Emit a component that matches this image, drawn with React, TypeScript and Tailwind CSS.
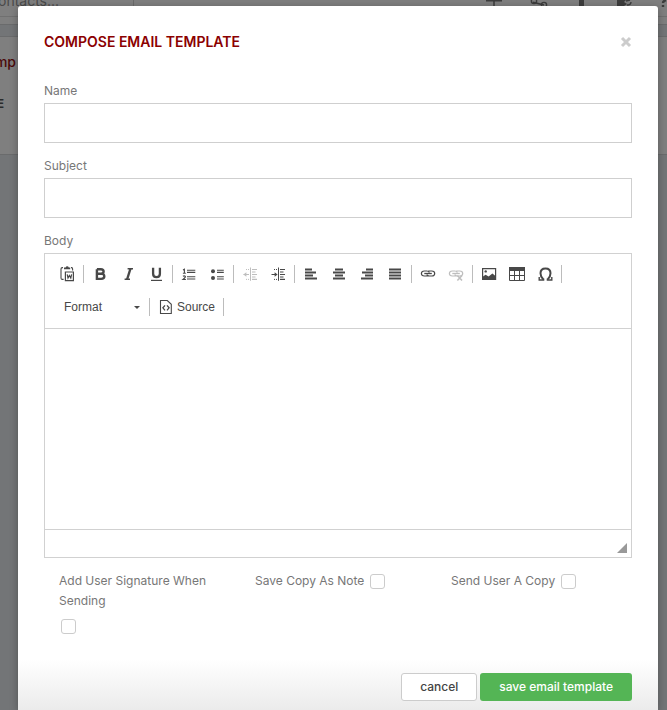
import type { ReactNode } from 'react'

const icon = 'size-4 shrink-0'

function Separator() {
  return <span className="mx-[2px] h-[18px] w-px shrink-0 bg-[#bcbcbc]" />
}

function ToolButton({ label, disabled, children }: { label: string; disabled?: boolean; children: ReactNode }) {
  return (
    <button
      type="button"
      aria-label={label}
      title={label}
      disabled={disabled}
      className="flex size-7 items-center justify-center text-[#484848] disabled:opacity-35"
    >
      {children}
    </button>
  )
}

function Group({ children }: { children: ReactNode }) {
  return (
    <div className="flex items-center">
      {children}
      <Separator />
    </div>
  )
}

function PasteWordIcon() {
  return (
    <svg viewBox="0 0 16 16" className={icon} fill="none" stroke="currentColor">
      <path d="M4 1.6H3.3Q2 1.6 2 3V12Q2 13.4 3.3 13.4H4.6M12 1.6H12.6Q13.6 1.7 13.6 3V4.4" strokeWidth="1.1" />
      <path d="M5 3.2V1.5H6.6Q7 .3 8.2 .3T9.8 1.5H11.2V3.2Z" fill="currentColor" stroke="none" />
      <path d="M6.4 6H14.4V14.6H6.4Z" strokeWidth="1.2" />
      <path d="M8.2 8.4L9 12 10.4 9.4 11.8 12 12.6 8.4" strokeWidth="1.2" />
    </svg>
  )
}

function BoldIcon() {
  return (
    <svg viewBox="0 0 16 16" className={icon} fill="none" stroke="currentColor" strokeWidth="2.4">
      <path d="M4.9 3.2V12.9H9.2Q12.3 12.9 12.3 10.3T9.2 7.8H4.9M4.9 3.2H8.8Q11.6 3.2 11.6 5.5T8.8 7.8" />
    </svg>
  )
}

function ItalicIcon() {
  return (
    <svg viewBox="0 0 16 16" className={icon} fill="none" stroke="currentColor">
      <path d="M7.6 2.8H13M4.6 13.3H10" strokeWidth="1.6" />
      <path d="M10.5 2.6L7.1 13.4" strokeWidth="2.3" />
    </svg>
  )
}

function UnderlineIcon() {
  return (
    <svg viewBox="0 0 16 16" className={icon} fill="none" stroke="currentColor">
      <path d="M5.1 1.8V7.7Q5.1 11.1 8.5 11.1T11.9 7.7V1.8" strokeWidth="2.3" />
      <path d="M3 14.4H14" strokeWidth="1.2" />
    </svg>
  )
}

function NumberedListIcon() {
  return (
    <svg viewBox="0 0 16 16" className={icon} fill="none" stroke="currentColor">
      <path d="M2 3.9L3.4 3.1V7.2M1.9 7.3H4.8M1.9 10.3Q3.2 9.4 4.2 10.2T2 13.5H4.9" strokeWidth="1.1" />
      <path d="M6 4.2H14.3M6 6.4H14.3M6 10.8H14.3M6 13H14.3" strokeWidth="1.1" />
    </svg>
  )
}

function BulletListIcon() {
  return (
    <svg viewBox="0 0 16 16" className={icon} fill="none" stroke="currentColor">
      <circle cx="4" cy="5.2" r="2" fill="currentColor" stroke="none" />
      <circle cx="4" cy="11.9" r="2" fill="currentColor" stroke="none" />
      <path d="M8 4.2H14.8M8 6.4H14.8M8 10.8H14.8M8 13H14.8" strokeWidth="1.1" />
    </svg>
  )
}

function IndentIcon({ outdent }: { outdent?: boolean }) {
  return (
    <svg viewBox="0 0 16 16" className={icon} fill="none" stroke="currentColor">
      <path d="M8.5 1.5V14.8" />
      <path d="M10 3.5H15M10 6H13.5M10 8.5H15M10 11H13.5M10 13.4H15" strokeWidth="1.1" />
      <path d="M4 3.5H7.5M4 13.4H7.5" strokeDasharray="1 1" />
      <path d="M1.5 8.5H7" />
      {outdent ? (
        <path d="M4.4 6.2V10.8L1.4 8.5Z" fill="currentColor" stroke="none" />
      ) : (
        <path d="M4.6 6.2V10.8L7.6 8.5Z" fill="currentColor" stroke="none" />
      )}
    </svg>
  )
}

function AlignIcon({ d }: { d: string }) {
  return (
    <svg viewBox="0 0 16 16" className={icon} fill="none" stroke="currentColor" strokeWidth="2">
      <path d={d} />
    </svg>
  )
}

function LinkIcon({ broken }: { broken?: boolean }) {
  return (
    <svg viewBox="0 0 16 16" className={icon} fill="none" stroke="currentColor">
      <path
        d="M7.8 10H4.3Q1.4 10 1.4 7.5T4.3 5H6.8Q9 5 9.3 6.6M8.3 5H11.8Q14.7 5 14.7 7.5T11.8 10H9.3Q7.2 10 6.8 8.5"
        strokeWidth="1.2"
      />
      <path d="M4.3 7.5H11.8" strokeWidth="1.3" />
      {broken && <path d="M9.4 9.6L14 14.6M14 9.6L9.4 14.6" strokeWidth="1.5" />}
    </svg>
  )
}

function ImageIcon() {
  return (
    <svg viewBox="0 0 16 16" className={icon} fill="none" stroke="currentColor">
      <path d="M1.6 2.6H14.6V13.4H1.6Z" strokeWidth="1.2" />
      <path d="M2 13V10.6L4.6 8.8 7.6 10.6 11.4 7.4 14.2 9.8V13Z" fill="currentColor" stroke="none" />
      <circle cx="4.7" cy="5.4" r="1.2" fill="currentColor" stroke="none" />
    </svg>
  )
}

function TableIcon() {
  return (
    <svg viewBox="0 0 16 16" className={icon} fill="none" stroke="currentColor">
      <path d="M0 1H16V5H0Z" fill="currentColor" stroke="none" />
      <path d="M.5 5V14.5H15.5V5M5.5 5V14.5M10.5 5V14.5M.5 9.5H15.5" />
    </svg>
  )
}

function OmegaIcon() {
  return (
    <svg viewBox="0 0 16 16" className={icon} fill="none" stroke="currentColor">
      <path d="M6.2 13.2Q3.5 10.8 3.5 7.3Q3.5 2.5 8.5 2.5T13.5 7.3Q13.5 10.8 10.8 13.2" strokeWidth="2" />
      <path d="M2.2 11V14H6.6V12.6M14.8 11V14H10.4V12.6" strokeWidth="1.4" />
    </svg>
  )
}

function SourceIcon() {
  return (
    <svg viewBox="0 0 16 16" className={icon} fill="none" stroke="currentColor">
      <path d="M2.5 1.5H9.3L13.3 5.3V14.5H2.5Z" strokeWidth="1.1" />
      <path d="M7 6.3L4.9 8.8 7 11.3M9 6.3L11.1 8.8 9 11.3" strokeWidth="1.3" />
    </svg>
  )
}

function Toolbar() {
  return (
    <div className="flex flex-wrap gap-y-[5px] border-b border-[#d1d1d1] px-2 pt-[6px] pb-[7px]">
      <Group>
        <ToolButton label="Paste from Word"><PasteWordIcon /></ToolButton>
      </Group>
      <Group>
        <ToolButton label="Bold"><BoldIcon /></ToolButton>
        <ToolButton label="Italic"><ItalicIcon /></ToolButton>
        <ToolButton label="Underline"><UnderlineIcon /></ToolButton>
      </Group>
      <Group>
        <ToolButton label="Numbered list"><NumberedListIcon /></ToolButton>
        <ToolButton label="Bulleted list"><BulletListIcon /></ToolButton>
      </Group>
      <Group>
        <ToolButton label="Decrease indent" disabled><IndentIcon outdent /></ToolButton>
        <ToolButton label="Increase indent"><IndentIcon /></ToolButton>
      </Group>
      <Group>
        <ToolButton label="Align left"><AlignIcon d="M2 3.5H9M2 6.5H13M2 9.5H10M2 12.5H14" /></ToolButton>
        <ToolButton label="Center"><AlignIcon d="M4 3.5H12M2 6.5H14M4 9.5H12M2 12.5H14" /></ToolButton>
        <ToolButton label="Align right"><AlignIcon d="M7 3.5H14M3 6.5H14M6 9.5H14M2 12.5H14" /></ToolButton>
        <ToolButton label="Justify"><AlignIcon d="M2 3.5H14M2 6.5H14M2 9.5H14M2 12.5H14" /></ToolButton>
      </Group>
      <Group>
        <ToolButton label="Link"><LinkIcon /></ToolButton>
        <ToolButton label="Unlink" disabled><LinkIcon broken /></ToolButton>
      </Group>
      <Group>
        <ToolButton label="Image"><ImageIcon /></ToolButton>
        <ToolButton label="Table"><TableIcon /></ToolButton>
        <ToolButton label="Insert special character"><OmegaIcon /></ToolButton>
      </Group>
      <Group>
        <div className="relative flex h-7 w-[94px] items-center">
          <select
            aria-label="Paragraph format"
            className="h-full w-full appearance-none bg-transparent pl-[11px] font-['Liberation_Sans',sans-serif] text-xs text-[#484848]"
          >
            <option>Format</option>
          </select>
          <span className="pointer-events-none absolute right-[7px] border-x-[3px] border-t-[3px] border-x-transparent border-t-[#484848]" />
        </div>
      </Group>
      <Group>
        <button
          type="button"
          className="flex h-7 items-center gap-[3px] px-[6px] font-['Liberation_Sans',sans-serif] text-xs text-[#484848]"
        >
          <SourceIcon />
          Source
        </button>
      </Group>
    </div>
  )
}

function Field({ id, label }: { id: string; label: string }) {
  return (
    <div className="mb-[11px]">
      <label htmlFor={id} className="block leading-6">{label}</label>
      <input id={id} type="text" className="block h-10 w-full border border-[#cfcfcf] bg-white px-3 outline-none" />
    </div>
  )
}

function CheckOption({ id, label }: { id: string; label: string }) {
  return (
    <div className="flex flex-wrap content-start items-center gap-x-1 gap-y-2 px-[15px]">
      <label htmlFor={id} className="leading-5">{label}</label>
      <input
        id={id}
        type="checkbox"
        className="ml-[2px] size-[15px] appearance-none rounded-[3px] border border-[#cccccc] bg-white checked:bg-[#54b454]"
      />
    </div>
  )
}

function Backdrop() {
  return (
    <div className="absolute inset-0 flex flex-col overflow-hidden bg-[#737577]" aria-hidden="true">
      <div className="h-[25px] shrink-0 border-b border-[#6a6b6c] bg-[#7f7f7f]">
        <div className="flex h-[17px] items-start justify-between border-b border-[#707070]">
          <div className="flex h-full w-[134px] items-start border-r border-[#6a6a6a] text-sm leading-5 text-[#4a4a4a]">
            <span className="-mt-[9px] -ml-[10px]">contacts...</span>
          </div>
          <svg viewBox="0 0 190 8" className="h-2 w-[190px] shrink-0" fill="none" stroke="#3c3c3c">
            <path d="M9 .8H25M17 0V6" strokeWidth="1.5" />
            <path d="M56 2.2L67 5" strokeWidth="1.4" />
            <circle cx="57" cy="1" r="2.6" strokeWidth="1.4" />
            <circle cx="67" cy="5" r="2.6" strokeWidth="1.4" />
            <path d="M102 0H107V6H102Z" fill="#3c3c3c" stroke="none" />
            <path d="M140 0H149L147 2 150 4 147 6H140Z" fill="#3c3c3c" stroke="none" />
            <path d="M149 1L153 0M150 5Q154 5 154 2" strokeWidth="1.4" />
            <path d="M189 0Q186 1 186 3M186 5V7" strokeWidth="2.4" />
          </svg>
        </div>
      </div>
      <div className="h-[11px] shrink-0" />
      <div className="h-[119px] shrink-0 border-y border-[#6a6b6c] bg-[#7f7f7f]">
        <p className="flex w-4 justify-end pt-[15px] text-sm leading-5 font-medium text-[#4b0a0a]">Temp</p>
        <p className="flex w-1 justify-end pt-[22px] text-xs leading-5 font-bold text-[#2a2a2a]">NAME</p>
      </div>
    </div>
  )
}

export default function App() {
  return (
    <div className="relative min-h-screen overflow-hidden font-[Inter,sans-serif] text-xs text-[#777777]">
      <Backdrop />
      <div
        role="dialog"
        aria-labelledby="dialog-title"
        className="relative mt-[6px] mr-[9px] ml-[18px] rounded-[3px] bg-white shadow-[0_2px_8px_rgba(0,0,0,0.3)]"
      >
        <header className="flex items-center justify-between px-[26px] pt-[26px]">
          <h1 id="dialog-title" className="text-sm leading-5 font-semibold text-[#8b0000]">COMPOSE EMAIL TEMPLATE</h1>
          <button type="button" aria-label="Close" className="flex h-5 items-center text-[#cccccc]">
            <svg viewBox="0 0 12 12" className="size-3" fill="none" stroke="currentColor" strokeWidth="3">
              <path d="M2 2L10 10M10 2L2 10" />
            </svg>
          </button>
        </header>

        <form onSubmit={(event) => event.preventDefault()}>
          <div className="px-[26px] pt-[27px]">
            <Field id="name" label="Name" />
            <Field id="subject" label="Subject" />
            <label htmlFor="body" className="block leading-6">Body</label>
            <div className="border border-[#d1d1d1]">
              <Toolbar />
              <textarea id="body" className="block h-[200px] w-full resize-none bg-white p-5 outline-none" />
              <div className="flex h-7 items-end justify-end border-t border-[#d1d1d1] p-1">
                <svg viewBox="0 0 10 10" className="size-[10px]">
                  <path d="M10 0V10H0Z" fill="#999999" />
                </svg>
              </div>
            </div>
            <div className="mt-[13px] grid grid-cols-3">
              <CheckOption id="signature" label="Add User Signature When Sending" />
              <CheckOption id="note" label="Save Copy As Note" />
              <CheckOption id="copy" label="Send User A Copy" />
            </div>
          </div>
          <footer className="mt-5 flex justify-end gap-[3px] bg-linear-to-b from-white from-10% to-[#ebebeb] px-[26px] pt-[19px] pb-[9px]">
            <button
              type="button"
              className="h-7 rounded-[3px] border border-[#cccccc] bg-white px-[18px] text-xs font-medium text-[#444444]"
            >
              cancel
            </button>
            <button type="submit" className="h-7 rounded-[3px] bg-[#54b555] px-[19px] text-xs font-medium text-white">
              save email template
            </button>
          </footer>
        </form>
      </div>
    </div>
  )
}
